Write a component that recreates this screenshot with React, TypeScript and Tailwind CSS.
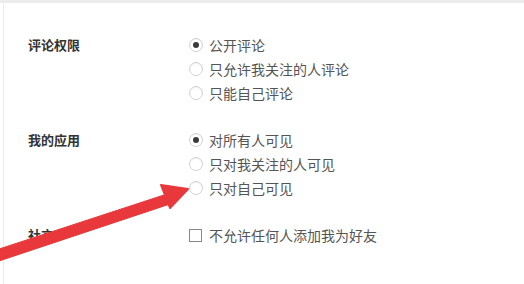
import React from "react";

const font = { fontFamily: '"Microsoft YaHei", "Noto Sans CJK SC", "Noto Sans", sans-serif' };

function Radio({ checked }: { checked?: boolean }) {
  return (
    <span className="flex h-[14px] w-[14px] items-center justify-center rounded-full border border-[#d2d2d2] bg-white shadow-[inset_0_1px_1px_rgba(0,0,0,0.06)]">
      {checked && <span className="h-[6px] w-[6px] rounded-full bg-[#3a3a3a]" />}
    </span>
  );
}

function Option({ text, checked, box }: { text: string; checked?: boolean; box?: boolean }) {
  return (
    <div className="flex h-[24px] items-center">
      <div className="flex w-[20px] items-center">
        {box ? (
          <span className="h-[13px] w-[13px] border border-[#888] bg-white" />
        ) : (
          <Radio checked={checked} />
        )}
      </div>
      <span className="text-[14px] leading-[24px] text-[#555]">{text}</span>
    </div>
  );
}

function Section({ label, children, className }: { label: string; children: React.ReactNode; className?: string }) {
  return (
    <div className={`flex ${className ?? ""}`}>
      <div className="w-[161px] text-[13px] font-bold leading-[24px] text-[#333]">{label}</div>
      <div className="flex flex-col">{children}</div>
    </div>
  );
}

export default function App() {
  return (
    <div className="relative h-[284px] w-[524px] overflow-hidden bg-white" style={font}>
      <div className="h-[3px] w-full bg-[#ececec]" />
      <div className="ml-[3px] h-[281px] border-l border-[#ebebeb] pl-[24px] pt-[30px]">
        <Section label="评论权限">
          <Option text="公开评论" checked />
          <Option text="只允许我关注的人评论" />
          <Option text="只能自己评论" />
        </Section>
        <Section label="我的应用" className="mt-[23px]">
          <Option text="对所有人可见" checked />
          <Option text="只对我关注的人可见" />
          <Option text="只对自己可见" />
        </Section>
        <Section label="社交" className="mt-[23px]">
          <Option text="不允许任何人添加我为好友" box />
        </Section>
      </div>
      <svg
        className="pointer-events-none absolute left-0 top-0"
        width="524"
        height="284"
        viewBox="0 0 524 284"
      >
        <defs>
          <filter id="soft" x="-10%" y="-10%" width="120%" height="120%">
            <feGaussianBlur stdDeviation="0.7" />
          </filter>
        </defs>
        <g filter="url(#soft)" fill="#e8383b" stroke="#e8383b" strokeLinejoin="round">
          <polygon points="-4,250 167,194 170,204 -1,261" strokeWidth="1" />
          <polygon points="188,189 161,185 170,208" strokeWidth="2" />
        </g>
      </svg>
    </div>
  );
}
